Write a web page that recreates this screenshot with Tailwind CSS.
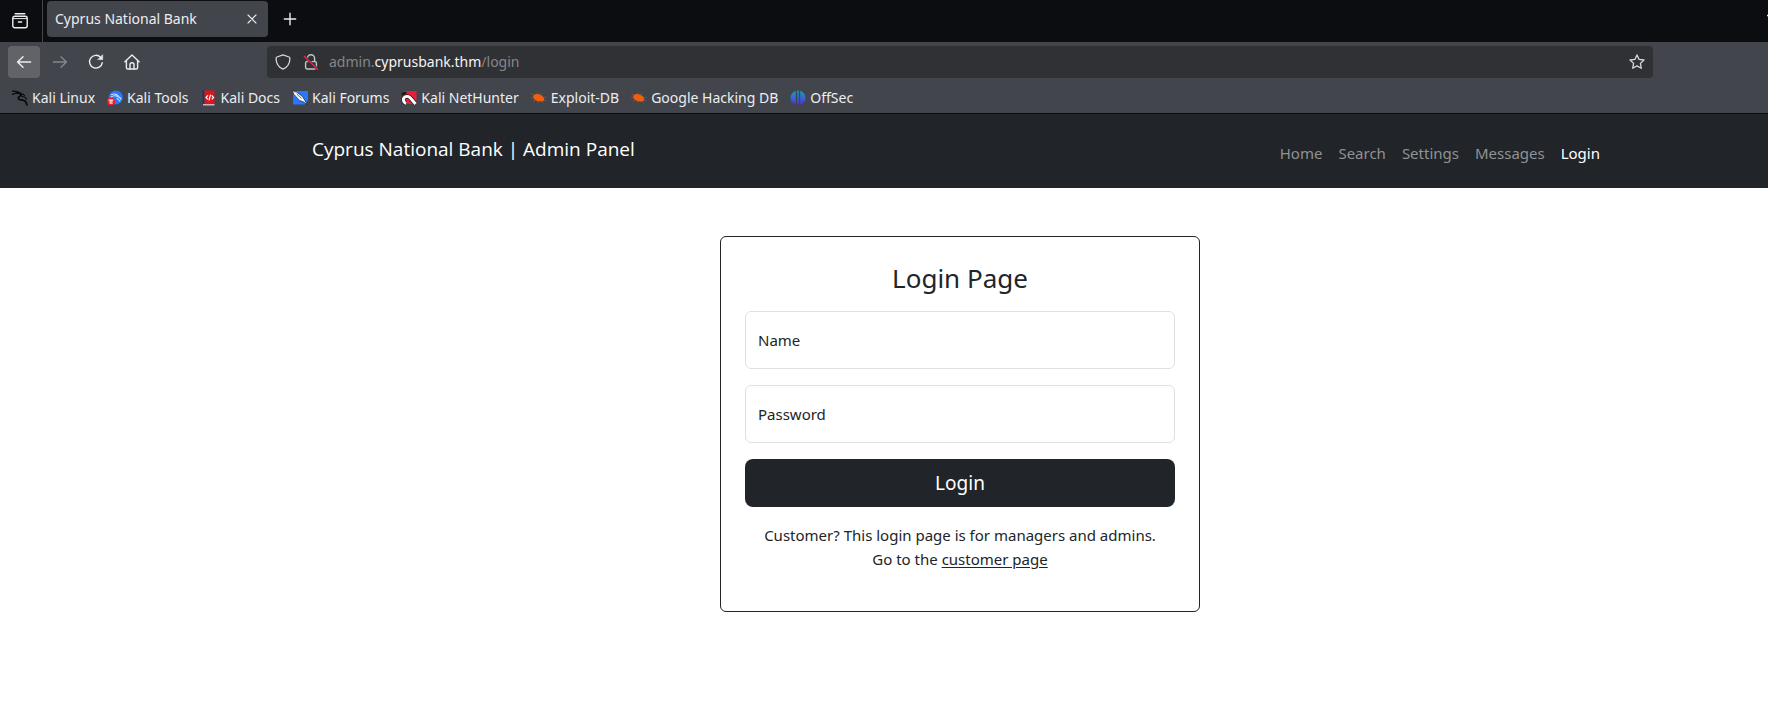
<!DOCTYPE html>
<html lang="en">
<head>
<meta charset="utf-8">
<meta name="viewport" content="width=device-width, initial-scale=1">
<title>Cyprus National Bank</title>
<script src="https://cdn.jsdelivr.net/npm/@tailwindcss/browser@4"></script>
</head>
<body class="min-h-screen bg-white font-['Noto_Sans',sans-serif] text-[15px] leading-6 text-[#212529]">

<!-- Browser chrome -->
<div class="border-b border-[#0c0c0d] bg-[#42454c] text-sm text-[#ededf0]">
  <!-- Tab strip -->
  <div class="flex h-[42px] items-center bg-[#0c0d11]">
    <button aria-label="Recent tabs" class="flex h-[42px] w-[43px] items-center border-r border-[#45464a] pl-3">
      <svg class="size-4" viewBox="0 0 16 16" fill="none" stroke="currentColor" stroke-width="1.4" stroke-linecap="round"><path d="M3.2 .8h9.6"/><path d="M.8 5.200a2 2 0 0 1 2-2h10.4a2 2 0 0 1 2 2v7.600a2 2 0 0 1-2 2H2.8a2 2 0 0 1-2-2z"/><path d="M1.200 5.600h13.600" stroke-width="1"/><path d="M6.4 9h3.2"/></svg>
    </button>
    <div class="ml-1 mb-1 flex h-9 w-[221px] items-center justify-between rounded bg-[#42454c] pl-2 pr-2">
      <span>Cyprus National Bank</span>
      <button aria-label="Close tab" class="flex size-4 items-center justify-center">
        <svg class="size-4" viewBox="0 0 16 16" fill="none" stroke="currentColor" stroke-width="1.1" stroke-linecap="round"><path d="M4 4l8 8M12 4l-8 8"/></svg>
      </button>
    </div>
    <button aria-label="New tab" class="mb-1 ml-3 flex size-5 items-center justify-center">
      <svg class="size-4" viewBox="0 0 16 16" fill="none" stroke="currentColor" stroke-width="1.4" stroke-linecap="round"><path d="M8 2.3v11.4M2.3 8h11.4"/></svg>
    </button>
    <button aria-label="List all tabs" class="mb-2 ml-auto flex w-px overflow-hidden">
      <svg class="h-4 w-4 shrink-0" viewBox="0 0 16 16" fill="none" stroke="currentColor" stroke-width="1.3"><path d="M0 6l7 6 7-6"/></svg>
    </button>
  </div>

  <!-- Toolbar -->
  <div class="flex h-10 items-center pl-2">
    <button aria-label="Back" class="flex size-8 items-center justify-center rounded bg-[#626368]">
      <svg class="size-4" viewBox="0 0 16 16" fill="none" stroke="currentColor" stroke-width="1.5" stroke-linecap="round" stroke-linejoin="round"><path d="M14.6 8H1.6M7 2.8L1.6 8 7 13.2"/></svg>
    </button>
    <button aria-label="Forward" disabled class="ml-1 flex size-8 items-center justify-center text-[#85868b]">
      <svg class="size-4" viewBox="0 0 16 16" fill="none" stroke="currentColor" stroke-width="1.4" stroke-linecap="round" stroke-linejoin="round"><path d="M1.4 8h13M9 2.8L14.4 8 9 13.2"/></svg>
    </button>
    <button aria-label="Reload" class="ml-1 flex size-8 items-center justify-center">
      <svg class="size-4" viewBox="0 0 16 16" fill="none" stroke="currentColor" stroke-width="1.4" stroke-linecap="round"><path d="M12.6 3.3A6.4 6.4 0 1 0 14.3 8.6"/><path d="M14.7 1v4.6h-4.6z" fill="currentColor" stroke-width=".6" stroke-linejoin="round"/></svg>
    </button>
    <button aria-label="Home" class="ml-1 flex size-8 items-center justify-center">
      <svg class="size-4" viewBox="0 0 16 16" fill="none" stroke="currentColor" stroke-width="1.4" stroke-linecap="round" stroke-linejoin="round"><path d="M.9 7.8L8 .9l7.1 6.9M2.4 6.8v6.9a1.3 1.3 0 0 0 1.3 1.3h8.6a1.3 1.3 0 0 0 1.3-1.3V6.8"/><path d="M6 15v-4.2a2 2 0 0 1 4 0V15"/></svg>
    </button>
    <div class="ml-[119px] mr-[115px] flex h-8 flex-1 items-center rounded bg-[#303135] pl-2 pr-2">
      <button aria-label="Tracking protection" class="size-4">
        <svg class="size-4" viewBox="0 0 16 16" fill="none" stroke="#d6d6d9" stroke-width="1.3" stroke-linejoin="round"><path d="M8 .8l6 2.2c.7.3.9.8.9 1.4 0 5-2.3 8.6-6.9 10.8C3.4 13 1.100 9.400 1.100 4.400c0-.6.2-1.1.9-1.400z"/></svg>
      </button>
      <button aria-label="Connection is not secure" class="ml-3 size-4">
        <svg class="size-4" viewBox="0 0 16 16" fill="none" stroke="#c5c5c9" stroke-width="1.4" stroke-linejoin="round" stroke-linecap="round"><rect x="2.6" y="7.600" width="10.8" height="7.400" rx="1.400"/><path d="M4.400 7.400V4.400a3.600 3.600 0 0 1 7.200 0v3"/><path d="M1.300 2.200l13.200 13" stroke="#303135" stroke-width="2.600"/><path d="M1.300 2.200l13.200 13" stroke="#e22850" stroke-width="1.500"/></svg>
      </button>
      <a href="#" class="ml-[10px] text-[#85868a]">admin.<span class="text-[#f4f4f7]">cyprusbank.thm</span>/login</a>
      <button aria-label="Bookmark this page" class="ml-auto size-4">
        <svg class="size-4" viewBox="0 0 16 16" fill="none" stroke="#d8d8dc" stroke-width="1.3" stroke-linejoin="round"><path d="M8 .9l2.100 4.500 4.900.6-3.600 3.400.9 4.900L8 11.900l-4.300 2.400.9-4.900L1 6l4.900-.6z"/></svg>
      </button>
    </div>
  </div>

  <!-- Bookmarks -->
  <nav aria-label="Bookmarks" class="flex h-[31px] items-center gap-3 pl-3">
    <a href="#" class="flex items-center gap-1">
      <svg class="size-4" viewBox="0 0 16 16" fill="none" stroke="#08090b" stroke-linecap="round" stroke-linejoin="round"><path d="M.5 1.200C3 1 5.500 1.500 7.300 3M.4 4.600C2.500 3.400 5.600 2.800 8.200 3.800" stroke-width="1.200"/><path d="M5 2.400c2.200.2 4 1.400 4.300 2.600L7 6.800c-1.400 1.200-.6 2.600 1 2.900l3.600.7c2 .5 3 2 3.300 4.600" stroke-width="1.700"/><path d="M8.600 4c1.800-.3 3 .2 3.900 1.500M10 6.500c2 0 3.600.800 4.600 2.600" stroke-width="1.200"/></svg>Kali Linux</a>
    <a href="#" class="flex items-center gap-1">
      <svg class="size-4" viewBox="0 0 16 16"><circle cx="8.800" cy="7.400" r="7" fill="#2777ff"/><path d="M4 4.800c3-1.300 6-.6 7.300 1.200M3.600 7.200c2.400-1.600 5-1.800 7.300-.6 1.900.4 2.900 1.600 3.100 3.200M10 7.700c0 2 2.600 1.700 3 4" fill="none" stroke="#cfe2ff" stroke-width="1.100"/><circle cx="4" cy="11.600" r="4" fill="#ee1c25"/><path d="M1.600 10h4.800M3.200 10v4M4.900 10v4" stroke="#fff" fill="none"/></svg>Kali Tools</a>
    <a href="#" class="flex items-center gap-1">
      <svg class="size-4" viewBox="0 0 16 16"><path d="M1.500.5h2v14h-2z" fill="#19356b"/><path d="M3.500.5H13.500V14H3.500z" fill="#dc141c"/><path d="M2 14h11.500v1.500H2z" fill="#c8b5be"/><path d="M6.900 5.400L5 7.400l1.900 2M10.700 5.400l1.900 2-1.900 2M9.500 4.600L8 10.300" stroke="#fff" stroke-width="1.200" fill="none"/></svg>Kali Docs</a>
    <a href="#" class="flex items-center gap-1">
      <svg class="size-4" viewBox="0 0 16 16"><path d="M1.500 1H16v9l-3 4.500H1z" fill="#2777ff"/><path d="M0 .2l2.200 1.300L4.500 2l6.200 4.700 2 3.500 2.800 4.800-3.700-2.900-4.200-1.600-4-4.300L2 4.500z" fill="#f7f9fc" stroke="#182539" stroke-width=".7"/><path d="M4.600 3.900l5 4.600" stroke="#6d7480"/></svg>Kali Forums</a>
    <a href="#" class="flex items-center gap-1">
      <svg class="size-4" viewBox="0 0 16 16"><path d="M3 1h12.500v13H6L1 9z" fill="#e51f38"/><path d="M.5 3.500L4 1.500l2 1-2 2-3 1z" fill="#17181b"/><path d="M14.500 14L10 8.600C8.300 6.400 5.600 5.900 3.700 7.100 1.500 8.700 2.200 12.500 5 13.600" fill="none" stroke="#17181b" stroke-width="4.200"/><path d="M14.500 14L10 8.600C8.300 6.400 5.600 5.900 3.700 7.100 1.500 8.700 2.200 12.500 5 13.600" fill="none" stroke="#fff" stroke-width="3"/></svg>Kali NetHunter</a>
    <a href="#" class="flex items-center gap-1">
      <svg class="size-4" viewBox="0 0 16 16" fill="#ee6010"><path d="M2.600 5.200C5 3.200 9 3.800 11.300 6c1.600 1.500 2.300 3 1.700 4.300-1.200 1.700-6 1.700-8.600-.2C2.400 8.700 1.500 6.700 2.600 5.200z"/><path d="M.3 3.500l3 1.800M6.500 2.500l.9 2M10.600 3.400l-.7 2M12.400 7.500l3-.3M12.600 9.500l2.600 1.200M10.500 10.500l2.200 2.300M7.500 10.800l-1 2.200M4.400 9.800L2 11.500M2.400 7.800L0 8" fill="none" stroke="#d75a14" stroke-width=".5"/></svg>Exploit-DB</a>
    <a href="#" class="flex items-center gap-1">
      <svg class="size-4" viewBox="0 0 16 16" fill="#ee6010"><path d="M2.600 5.200C5 3.200 9 3.800 11.300 6c1.600 1.500 2.300 3 1.700 4.300-1.200 1.700-6 1.700-8.600-.2C2.400 8.700 1.500 6.700 2.600 5.200z"/><path d="M.3 3.500l3 1.800M6.500 2.500l.9 2M10.600 3.400l-.7 2M12.400 7.500l3-.3M12.600 9.500l2.600 1.200M10.500 10.500l2.200 2.300M7.500 10.800l-1 2.200M4.400 9.800L2 11.500M2.400 7.800L0 8" fill="none" stroke="#d75a14" stroke-width=".5"/></svg>Google Hacking DB</a>
    <a href="#" class="flex items-center gap-1">
      <svg class="size-4" viewBox="0 0 16 16"><defs><linearGradient id="offsec" gradientUnits="userSpaceOnUse" x1="0" y1="0" x2="0" y2="16"><stop offset="0" stop-color="#14a0b8"/><stop offset=".5" stop-color="#3568d4"/><stop offset="1" stop-color="#5b22c4"/></linearGradient></defs><path d="M5.800.8v14C2.500 13.700.4 11 .4 7.800S2.500 2 5.800.8zM10.200.8c3.300 1.200 5.400 3.800 5.400 7s-2.100 5.900-5.400 7zM7.200.4h1.600v15.200H7.200z" fill="url(#offsec)"/></svg>OffSec</a>
  </nav>
</div>

<!-- Site header -->
<header class="bg-[#212529] pl-[152px]">
  <div class="mx-auto flex h-[74px] max-w-[1320px] items-center justify-between px-3">
    <a href="#" class="mb-1 font-['Open_Sans',sans-serif] text-[19px] text-white">Cyprus National Bank | Admin Panel</a>
    <nav aria-label="Main" class="flex gap-4 pr-2 pt-1 text-[#909294]">
      <a href="#">Home</a>
      <a href="#">Search</a>
      <a href="#">Settings</a>
      <a href="#">Messages</a>
      <a href="#" aria-current="page" class="text-white">Login</a>
    </nav>
  </div>
</header>

<main class="flex justify-center pt-12 pl-[152px]">
  <form class="w-full max-w-[480px] rounded-md border border-[#212529] px-6 pt-6 pb-10">
    <h1 class="mb-4 text-center text-[26px] leading-[34px]">Login Page</h1>
    <div class="relative mb-4">
      <input id="name" type="text" class="block h-[58px] w-full rounded-md border border-[#dee2e6] px-3">
      <label for="name" class="pointer-events-none absolute inset-y-0 left-[13px] flex items-center">Name</label>
    </div>
    <div class="relative mb-4">
      <input id="password" type="password" class="block h-[58px] w-full rounded-md border border-[#dee2e6] px-3">
      <label for="password" class="pointer-events-none absolute inset-y-0 left-[13px] flex items-center">Password</label>
    </div>
    <button type="button" class="mb-4 block h-12 w-full rounded-lg bg-[#212529] text-[19px] text-white">Login</button>
    <p class="text-center">Customer? This login page is for managers and admins.<br>Go to the <a href="#" class="underline underline-offset-2">customer page</a></p>
  </form>
</main>
</body>
</html>
